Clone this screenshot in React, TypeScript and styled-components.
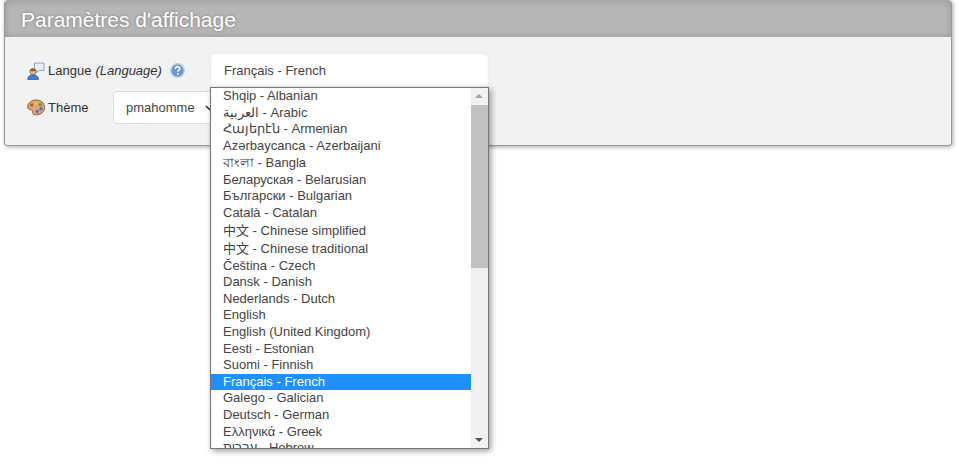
import styled, { createGlobalStyle } from "styled-components";

const GlobalStyle = createGlobalStyle`
  html, body {
    margin: 0;
    padding: 0;
    background: #fff;
    font-family: "Liberation Sans", Arial, "Noto Sans CJK SC", sans-serif;
    color: #444;
  }
`;

const Page = styled.div`
  position: relative;
  width: 959px;
  height: 468px;
  overflow: hidden;
  padding: 0 7px 0 4px;
  box-sizing: border-box;
`;

const Panel = styled.section`
  height: 146px;
  box-sizing: border-box;
  border: 1px solid #999;
  border-top-color: #aaa;
  border-radius: 4px;
  background: #f2f2f2;
  box-shadow: 1px 1px 4px rgba(0, 0, 0, 0.35);
`;

const PanelTitle = styled.h2`
  margin: 0;
  height: 36px;
  padding: 0 16px;
  box-sizing: border-box;
  border-radius: 3px 3px 0 0;
  background: #b6b6b6;
  box-shadow: inset 0 0 7px rgba(0, 0, 0, 0.18);
  color: #fff;
  font-size: 21px;
  font-weight: 400;
  line-height: 37px;
  text-shadow: 0 0 3px rgba(70, 70, 70, 0.55);
`;

const Form = styled.div`
  display: flex;
  flex-direction: column;
  gap: 4px;
  padding: 17px 0 0 22px;
`;

const Row = styled.div`
  display: flex;
  align-items: center;
  height: 33px;
`;

const Label = styled.label<{ $width: number }>`
  display: flex;
  align-items: center;
  gap: 3px;
  width: ${(p) => p.$width}px;
  font-size: 13px;
  color: #333;

  em {
    margin-left: 1px;
    font-style: italic;
  }

  svg {
    flex: none;
  }
`;

const HelpIcon = styled.svg`
  margin-left: 5px;
`;

const SelectBox = styled.div<{ $width: number; $bordered?: boolean }>`
  display: flex;
  align-items: center;
  width: ${(p) => p.$width}px;
  height: 33px;
  box-sizing: border-box;
  padding: 0 12px;
  border-radius: 4px;
  border: 1px solid ${(p) => (p.$bordered ? "#ddd" : "#fafafa")};
  background: #fff;
  box-shadow: ${(p) => (p.$bordered ? "none" : "0 0 5px rgba(0, 0, 0, 0.04)")};
  font-size: 13px;
  color: #444;

  svg {
    flex: none;
    margin-left: 10px;
  }
`;

const Dropdown = styled.div`
  position: absolute;
  left: 210px;
  top: 87px;
  width: 279px;
  height: 362px;
  box-sizing: border-box;
  display: flex;
  border: 1px solid #767676;
  background: #fff;
  box-shadow: 2px 2px 6px rgba(0, 0, 0, 0.4);
  overflow: hidden;
`;

const OptionList = styled.ul`
  flex: 1;
  margin: 0;
  padding: 0;
  list-style: none;
  overflow: hidden;
`;

const Option = styled.li<{ $selected?: boolean; $height?: number }>`
  height: ${(p) => p.$height ?? 16.6}px;
  line-height: ${(p) => p.$height ?? 16.6}px;
  padding-left: 12px;
  font-size: 13px;
  white-space: nowrap;
  color: ${(p) => (p.$selected ? "#fff" : "#444")};
  background: ${(p) => (p.$selected ? "#1e90ff" : "transparent")};
`;

const Scrollbar = styled.div`
  position: relative;
  width: 17px;
  background: #f1f1f1;
`;

const ScrollThumb = styled.div`
  position: absolute;
  left: 0;
  right: 0;
  top: 17px;
  height: 163px;
  background: #c1c1c1;
`;

const ScrollArrow = styled.div<{ $down?: boolean }>`
  position: absolute;
  left: 4px;
  ${(p) => (p.$down ? "bottom: 6px;" : "top: 6px;")}
  width: 0;
  height: 0;
  border-left: 4px solid transparent;
  border-right: 4px solid transparent;
  ${(p) =>
    p.$down ? "border-top: 4px solid #505050;" : "border-bottom: 4px solid #a3a3a3;"}
`;

const languages: { label: string; selected?: boolean; height?: number }[] = [
  { label: "Shqip - Albanian" },
  { label: "العربية - Arabic" },
  { label: "Հայերէն - Armenian" },
  { label: "Azərbaycanca - Azerbaijani" },
  { label: "বাংলা - Bangla", height: 17.5 },
  { label: "Беларуская - Belarusian" },
  { label: "Български - Bulgarian" },
  { label: "Català - Catalan" },
  { label: "中文 - Chinese simplified", height: 18 },
  { label: "中文 - Chinese traditional", height: 18 },
  { label: "Čeština - Czech" },
  { label: "Dansk - Danish" },
  { label: "Nederlands - Dutch" },
  { label: "English" },
  { label: "English (United Kingdom)" },
  { label: "Eesti - Estonian" },
  { label: "Suomi - Finnish" },
  { label: "Français - French", selected: true },
  { label: "Galego - Galician" },
  { label: "Deutsch - German" },
  { label: "Ελληνικά - Greek" },
  { label: "עברית - Hebrew" },
];

const PersonIcon = () => (
  <svg width="18" height="18" viewBox="0 0 18 18">
    <path d="M7.500 1h9.500v7.500h-5L9 11V8.500H7.500z" fill="#e6eefa" stroke="#8aa8d2" strokeWidth="1" />
    <circle cx="6" cy="9.500" r="3.200" fill="#e9b98f" stroke="#8a5a35" strokeWidth="0.7" />
    <path d="M2.800 9c.3-2.600 5.800-3 6.400 0-2 .3-4.300.3-6.400 0z" fill="#8a5a2b" />
    <path d="M.7 17.500c0-3 2.200-4.700 5.300-4.700s5.500 1.700 5.500 4.700z" fill="#3f7fd0" stroke="#2a5c9e" strokeWidth="0.8" />
  </svg>
);

const PaletteIcon = () => (
  <svg width="18" height="17" viewBox="0 0 18 17">
    <path d="M9 1C4.500 1 .8 4 .8 8c0 3 2.500 2.500 3.700 2.800 1.500.4.500 2.500 1.500 3.900 1 1.200 3.500 1.300 5.500.8 3.700-.9 6-3.600 6-7C17.500 4 14 1 9 1z" fill="#d9a877" stroke="#8a6238" strokeWidth="1" />
    <circle cx="4.800" cy="6" r="1.700" fill="#e0483e" />
    <circle cx="9" cy="4.200" r="1.700" fill="#f0c030" />
    <circle cx="13.200" cy="5.800" r="1.700" fill="#4f9e3f" />
    <circle cx="14" cy="9.800" r="1.700" fill="#3f74c8" />
    <circle cx="10.200" cy="12.500" r="1.700" fill="#8a55b0" />
  </svg>
);

export default function App() {
  return (
    <Page>
      <GlobalStyle />
      <Panel>
        <PanelTitle>Paramètres d'affichage</PanelTitle>
        <Form>
          <Row>
            <Label $width={184}>
              <PersonIcon />
              Langue <em>(Language)</em>
              <HelpIcon width="15" height="15" viewBox="0 0 15 15">
                <circle cx="7.500" cy="7.500" r="6.700" fill="#6c96cd" stroke="#b8cee9" strokeWidth="1.400" />
                <path d="M5.300 5.800c.2-1.300 1.100-2 2.300-2 1.300 0 2.200.8 2.200 1.900 0 1.500-1.900 1.500-1.900 3" fill="none" stroke="#fff" strokeWidth="1.500" />
                <circle cx="7.800" cy="11" r="0.900" fill="#fff" />
              </HelpIcon>
            </Label>
            <SelectBox $width={277}>Français - French</SelectBox>
          </Row>
          <Row>
            <Label $width={86}>
              <PaletteIcon />
              Thème
            </Label>
            <SelectBox $width={128} $bordered>
              pmahomme
              <svg width="9" height="6" viewBox="0 0 9 6">
                <path d="M1 1l3.500 3.500L8 1" fill="none" stroke="#333" strokeWidth="1.500" />
              </svg>
            </SelectBox>
          </Row>
        </Form>
      </Panel>
      <Dropdown>
        <OptionList>
          {languages.map((lang) => (
            <Option key={lang.label} $selected={lang.selected} $height={lang.height}>
              {lang.label}
            </Option>
          ))}
        </OptionList>
        <Scrollbar>
          <ScrollArrow />
          <ScrollThumb />
          <ScrollArrow $down />
        </Scrollbar>
      </Dropdown>
    </Page>
  );
}
